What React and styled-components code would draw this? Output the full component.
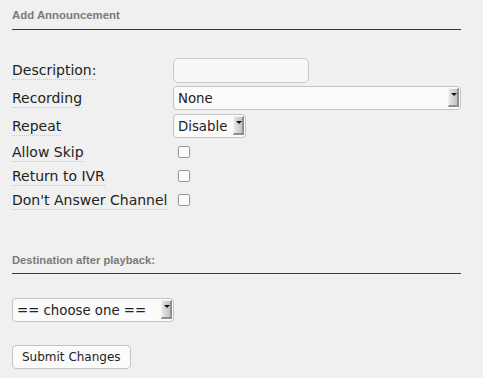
import React from 'react'
import styled, { createGlobalStyle } from 'styled-components'

const Global = createGlobalStyle`
    html, body {
        margin: 0;
        padding: 0;
        background: #f0f0f0;
    }
    body {
        font-family: "DejaVu Sans", Verdana, sans-serif;
        font-size: 14px;
        color: #222;
    }
`

function Select({ width, value }) {
    return (
        <SelectWrap width={width}>
            <SelectBox defaultValue={value}>
                <option>{value}</option>
            </SelectBox>
            <Arrow />
        </SelectWrap>
    )
}

function App() {
    const checks = ['Allow Skip', 'Return to IVR', "Don't Answer Channel"]
    return (
        <Page>
            <Global />
            <Heading>Add Announcement</Heading>

            <Form>
                <Row>
                    <Label><span>Description:</span></Label>
                    <TextInput type="text" />
                </Row>
                <Row>
                    <Label><span>Recording</span></Label>
                    <Select width={289} value="None" />
                </Row>
                <Row>
                    <Label><span>Repeat</span></Label>
                    <Select width={73} value="Disable" />
                </Row>
                {checks.map((c, i) => (
                    <CheckRow key={i}>
                        <Label><span>{c}</span></Label>
                        <Check />
                    </CheckRow>
                ))}
            </Form>

            <Heading small>Destination after playback:</Heading>

            <Dest>
                <Select width={162} value="== choose one ==" />
            </Dest>

            <Button>Submit Changes</Button>
        </Page>
    )
}

export default App

const Page = styled.div`
    padding: 7px 22px 0 12px;
    width: 449px;
`

const Heading = styled.div`
    font-family: "Liberation Sans", Arial, sans-serif;
    font-weight: bold;
    font-size: ${props => props.small ? '11.2px' : '11.4px'};
    color: #7a7a7a;
    padding: ${props => props.small ? '0 0 5px' : '0 0 6px'};
    border-bottom: 1px solid #3a3a3a;
    margin-top: ${props => props.small ? '40px' : '0'};
    line-height: 16px;
`

const Form = styled.div`
    margin-top: 26px;
    display: flex;
    flex-direction: column;
`

const Row = styled.div`
    display: flex;
    align-items: center;
    height: 28px;
`

const CheckRow = styled(Row)`
    height: 24px;
`

const Label = styled.div`
    width: 161px;
    flex-shrink: 0;
    span {
        border-bottom: 1px dotted #c8c8c8;
        padding-bottom: 1px;
        white-space: nowrap;
    }
`

const TextInput = styled.input`
    box-sizing: border-box;
    width: 136px;
    height: 25px;
    border: 1px solid #c9c9c9;
    border-radius: 5px;
    background: #f8f8f8;
    margin: 0;
    font: inherit;
    outline: none;
`

const SelectWrap = styled.div`
    position: relative;
    width: ${props => props.width}px;
    height: 24px;
`

const SelectBox = styled.select`
    appearance: none;
    -webkit-appearance: none;
    box-sizing: border-box;
    width: 100%;
    height: 100%;
    margin: 0;
    padding: 0 18px 0 4px;
    border: 1px solid #c4c4c4;
    border-radius: 4px;
    background: #fbfbfb;
    font-family: "DejaVu Sans", Verdana, sans-serif;
    font-size: 13.3px;
    color: #222;
    outline: none;
`

const Arrow = styled.span`
    position: absolute;
    top: 2px;
    right: 2px;
    width: 11px;
    height: 19px;
    box-sizing: border-box;
    background: linear-gradient(to right, #e6e6e6, #c2c2c2);
    border-right: 2px solid #8e8e8e;
    border-bottom: 2px solid #8e8e8e;
    border-top: 1px solid #f4f4f4;
    border-left: 1px solid #f4f4f4;
    pointer-events: none;
    &::after {
        content: '';
        position: absolute;
        top: 4px;
        left: 2px;
        border-left: 3px solid transparent;
        border-right: 3px solid transparent;
        border-top: 3px solid #111;
    }
`

const Check = styled.span`
    display: block;
    width: 10px;
    height: 10px;
    margin-left: 5px;
    border: 1px solid #9a9a9a;
    border-radius: 2px;
    background: #fcfcfc;
`

const Dest = styled.div`
    margin-top: 24px;
`

const Button = styled.button`
    margin-top: 23px;
    height: 24px;
    padding: 0 9px;
    border: 1px solid #c4c4c4;
    border-radius: 4px;
    background: #fbfbfb;
    font-family: "DejaVu Sans", Verdana, sans-serif;
    font-size: 12px;
    color: #222;
`
